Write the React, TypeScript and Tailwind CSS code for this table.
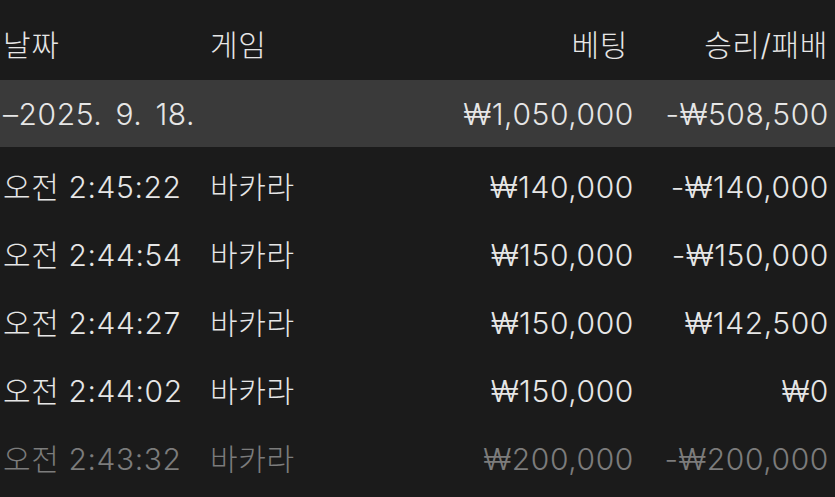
const rows = [
  { time: "오전 2:45:22", game: "바카라", bet: "₩140,000", result: "-₩140,000" },
  { time: "오전 2:44:54", game: "바카라", bet: "₩150,000", result: "-₩150,000" },
  { time: "오전 2:44:27", game: "바카라", bet: "₩150,000", result: "₩142,500" },
  { time: "오전 2:44:02", game: "바카라", bet: "₩150,000", result: "₩0" },
  { time: "오전 2:43:32", game: "바카라", bet: "₩200,000", result: "-₩200,000", dim: true },
];

const grid = "grid grid-cols-[207px_1fr_auto_195px] items-center pl-[3px] pr-[6px]";

export default function App() {
  return (
    <div
      className="w-[835px] h-[497px] overflow-hidden bg-[#1b1b1b] text-[#e6e6e6] text-[30px] leading-none font-light tracking-[0.02em]"
      style={{ fontFamily: 'Inter, "Noto Sans CJK KR", sans-serif' }}
    >
      {/* Header */}
      <div className={`${grid} h-[80px] pt-[10px]`}>
        <span>날짜</span>
        <span>게임</span>
        <span className="text-right pr-[6px]">베팅</span>
        <span className="text-right pr-[1px]">승리/패배</span>
      </div>

      {/* Day summary */}
      <div className={`${grid} h-[67px] bg-[#3a3a3a]`}>
        <span className="col-span-2 [word-spacing:4px]">–2025. 9. 18.</span>
        <span className="text-right">₩1,050,000</span>
        <span className="text-right">-₩508,500</span>
      </div>

      {/* Bets */}
      <div className="pt-[6px]">
        {rows.map((r) => (
          <div
            key={r.time}
            className={`${grid} h-[68px] ${r.dim ? "text-[#7c7c7c]" : ""}`}
          >
            <span>{r.time}</span>
            <span>{r.game}</span>
            <span className="text-right">{r.bet}</span>
            <span className="text-right">{r.result}</span>
          </div>
        ))}
      </div>
    </div>
  );
}
